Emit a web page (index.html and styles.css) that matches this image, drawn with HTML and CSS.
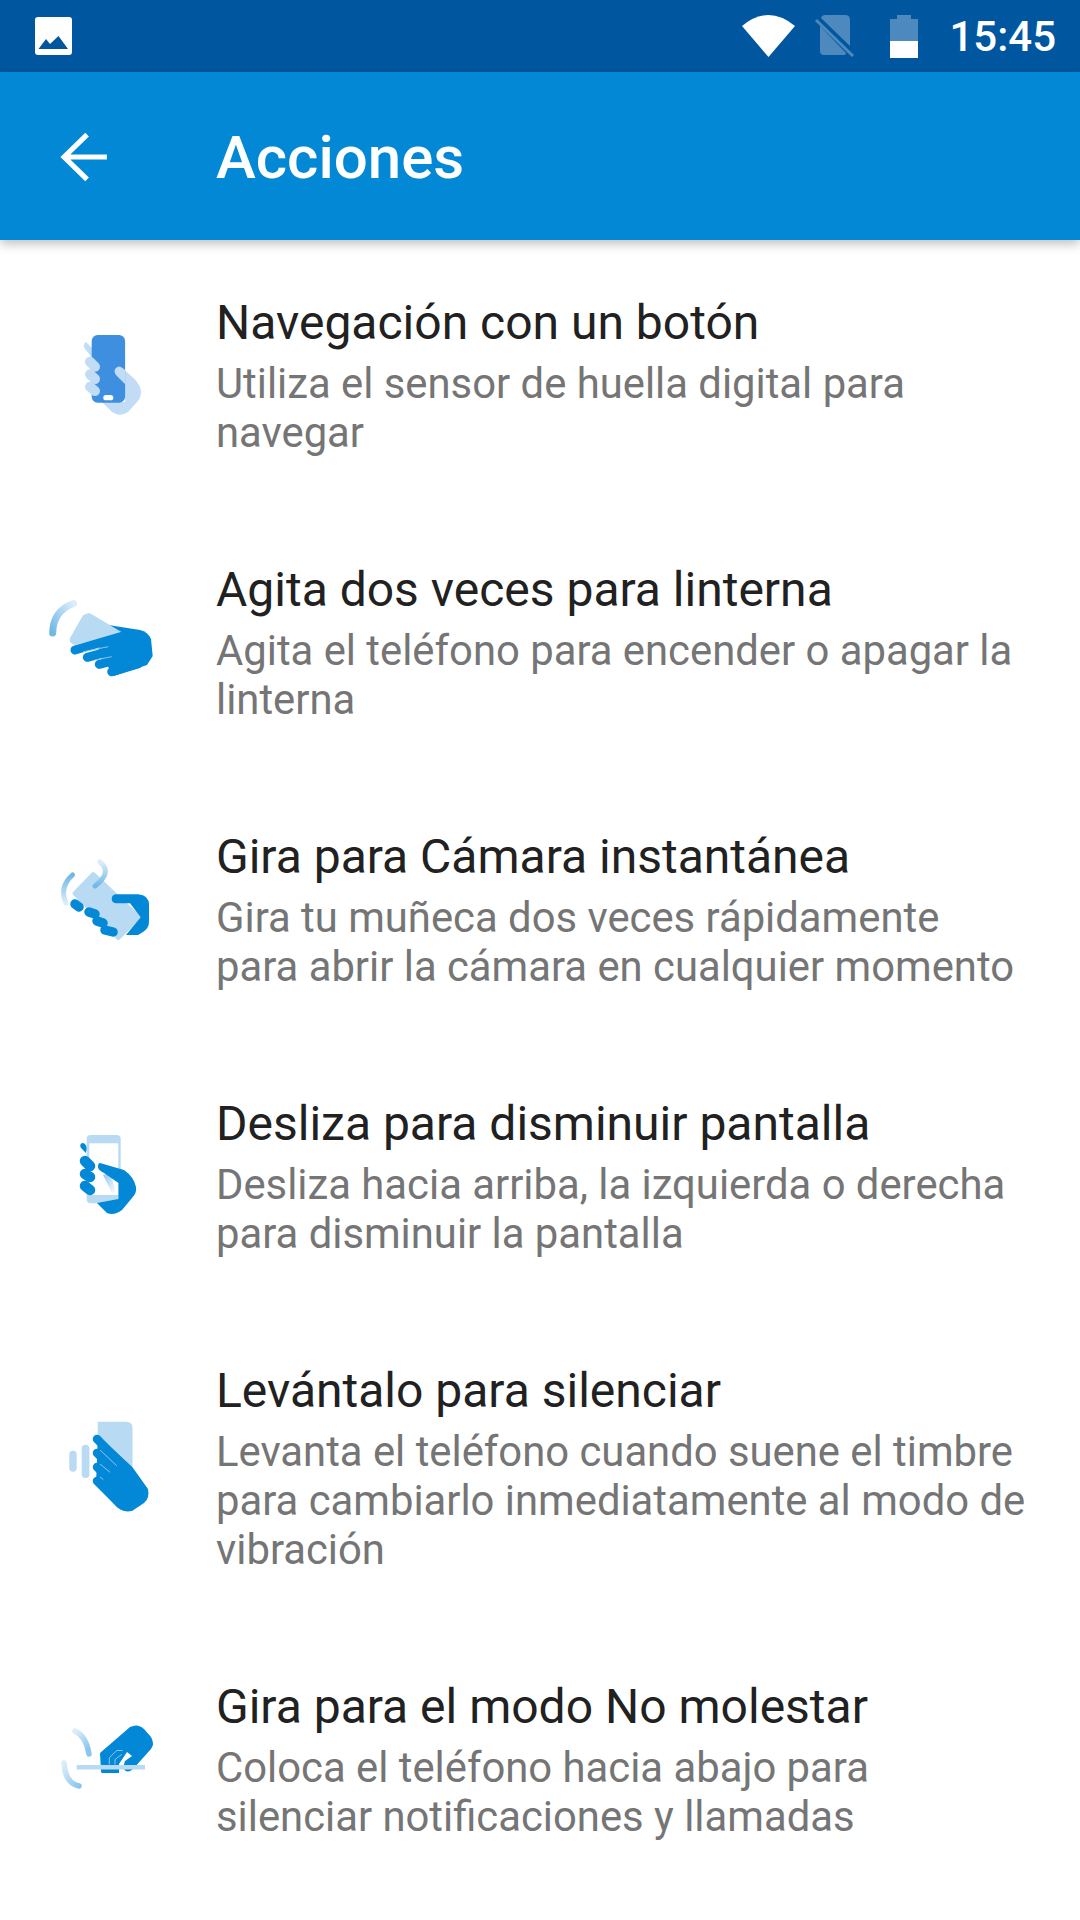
FILE: index.html
```html
<!DOCTYPE html>
<html lang="es">
<head>
  <meta charset="UTF-8">
  <meta name="viewport" content="width=device-width, initial-scale=1.0">
  <title>Acciones</title>
  <link rel="stylesheet" href="styles.css">
</head>
<body>
  <div class="screen">
    <div class="status-bar">
      <svg class="status-image" viewBox="0 0 37 38">
        <rect width="37" height="38" rx="3" fill="#fff"/>
        <path d="M3.500 32 L11 22 L15 27 L23.500 19 L33 32 Z" fill="#01579b"/>
      </svg>
      <div class="status-right">
        <svg class="status-wifi" viewBox="0 0 53 42">
          <path d="M0 11 Q26.500 -11 53 11 L26.500 42 Z" fill="#fff"/>
        </svg>
        <svg class="status-sim" viewBox="0 0 40 42">
          <path d="M10 0 H30 Q35 0 35 5 V31 L6 3 Q7 0 10 0 Z M5 11 L31 38 Q31 40 28 40 H9 Q5 40 5 36 Z" fill="#fff" fill-opacity="0.3"/>
          <path d="M1 5 L38 41" stroke="#fff" stroke-opacity="0.3" stroke-width="3"/>
        </svg>
        <svg class="status-battery" viewBox="0 0 28 43">
          <path d="M7 0 H21 V4 H28 V26 H0 V4 H7 Z" fill="#fff" fill-opacity="0.3"/>
          <rect y="26" width="28" height="17" fill="#fff"/>
        </svg>
        <span class="status-time">15:45</span>
      </div>
    </div>

    <header class="toolbar">
      <svg class="back-icon" viewBox="0 0 48 48">
        <path d="M45 24 H4 M26 2.500 L4 24 L26 45.500" fill="none" stroke="#fff" stroke-width="5"/>
      </svg>
      <h1>Acciones</h1>
    </header>

    <div class="list">
      <div class="row">
        <svg class="row-icon" viewBox="0 0 120 120">
          <path d="M38 28 L46 36 V46 L37 35 Q34 31 38 28 Z" fill="#c2dcf6"/>
          <path d="M74.500 54 L86.500 65 Q93 72 93 78 Q93 84 89 88 L80 98 Q74 102 68 100 Q63 98 60 94 L54 88 H77 V70 L68 61 Q65 57 68 54 Q71 51 74.500 54 Z" fill="#c2dcf6"/>
          <rect x="43.700" y="21" width="33.400" height="67.700" rx="6" fill="#3f8fe0"/>
          <path d="M74.500 54 L77 56 V70 L68 61 Q65 57 68 54 Q71 51 74.500 54 Z" fill="#c2dcf6"/>
          <g stroke="#c2dcf6" stroke-width="10" stroke-linecap="round">
            <path d="M42 47.700 L47 52.700"/>
            <path d="M42 60.300 L47 65"/>
            <path d="M42 72.700 L47 77"/>
          </g>
          <rect x="55.300" y="81" width="10" height="5.300" rx="2.600" fill="#fff"/>
        </svg>
        <div class="row-text">
          <div class="row-title">Navegación con un botón</div>
          <div class="row-summary">Utiliza el sensor de huella digital para navegar</div>
        </div>
      </div>

      <div class="row">
        <svg class="row-icon" viewBox="0 0 120 120">
          <defs>
            <linearGradient id="fade2" x1="0" y1="1" x2="1" y2="0">
              <stop offset="0" stop-color="#6fb8e6"/>
              <stop offset="1" stop-color="#dcedf9"/>
            </linearGradient>
          </defs>
          <path d="M4.700 52 Q5 30 25.500 22.500" fill="none" stroke="url(#fade2)" stroke-width="7" stroke-linecap="round"/>
          <path d="M60.300 44 L92 49 Q100 51 103 58 L104.700 75 L99 84 L66 95 L50 70 Z" fill="#0288d6"/>
          <path d="M22 57 L34 36 Q37 32 42 32.300 L74.700 51.700 L27 64 Q20 62 22 57 Z" fill="#b8daf2"/>
          <g stroke="#0288d6" stroke-width="9" stroke-linecap="round">
            <path d="M27 69 L75 55"/>
            <path d="M39.300 76.300 L72 67.300"/>
            <path d="M51.300 83.300 L78.700 75.700"/>
            <path d="M63.700 90.700 L90 83"/>
          </g>
          <g stroke="#8cc6ec" stroke-width="1">
            <path d="M35.300 70.700 L60.300 65.700"/>
            <path d="M47 79 L63.700 75.700"/>
          </g>
        </svg>
        <div class="row-text">
          <div class="row-title">Agita dos veces para linterna</div>
          <div class="row-summary">Agita el teléfono para encender o apagar la linterna</div>
        </div>
      </div>

      <div class="row">
        <svg class="row-icon" viewBox="0 0 120 120">
          <defs>
            <linearGradient id="fade3a" x1="0.500" y1="0" x2="0.500" y2="1">
              <stop offset="0" stop-color="#6fb8e6"/>
              <stop offset="1" stop-color="#dcedf9"/>
            </linearGradient>
            <linearGradient id="fade3b" x1="0.500" y1="1" x2="0.500" y2="0">
              <stop offset="0" stop-color="#6fb8e6"/>
              <stop offset="1" stop-color="#dcedf9"/>
            </linearGradient>
          </defs>
          <path d="M24.500 27 Q11 39 18 55" fill="none" stroke="url(#fade3a)" stroke-width="5" stroke-linecap="round"/>
          <path d="M45.300 26 L26.500 45.300 L70.300 90 L91 69.300 Z" fill="#b8daf2" stroke="#b8daf2" stroke-width="4" stroke-linejoin="round"/>
          <path d="M52 14 Q65 24 47 38" fill="none" stroke="url(#fade3b)" stroke-width="5" stroke-linecap="round"/>
          <path d="M68.700 46.300 H90 Q101 47 101 57 V74 Q101 80 95 84 L90 87 H78 L92.700 69.300 L82 55.300 H68.700 Q63.700 55 63.700 51 Q63.700 46.500 68.700 46.300 Z" fill="#0288d6"/>
          <g stroke="#0288d6" stroke-width="9.500" stroke-linecap="round">
            <path d="M27 56 L31 59"/>
            <path d="M41 64 L47 66"/>
            <path d="M49 73 L55 75"/>
            <path d="M57 82 L65 84"/>
          </g>
        </svg>
        <div class="row-text">
          <div class="row-title">Gira para Cámara instantánea</div>
          <div class="row-summary">Gira tu muñeca dos veces rápidamente para abrir la cámara en cualquier momento</div>
        </div>
      </div>

      <div class="row">
        <svg class="row-icon" viewBox="0 0 120 120">
          <defs>
            <linearGradient id="fade4" x1="0" y1="0" x2="1" y2="1">
              <stop offset="0" stop-color="#8cc6ec"/>
              <stop offset="1" stop-color="#ffffff"/>
            </linearGradient>
          </defs>
          <rect x="38.700" y="20" width="34" height="68.300" rx="4" fill="#b8daf2"/>
          <rect x="41.300" y="28.300" width="29" height="51.700" fill="#fff"/>
          <path d="M55 60 L62 58 L68 76 L64 78 Z" fill="url(#fade4)"/>
          <path d="M52 48 L76 55 Q86 62 88 72 Q89 78 84 83 L74 95 Q66 101 59 98 L49 88 L70.500 84 V68 L56 58 Q50 55 50 52 Q50 48 52 48 Z" fill="#0288d6"/>
          <path d="M34 28 Q38 28 38.700 33 L38 38 L33 33 Q31 30 34 28 Z" fill="#0288d6"/>
          <g stroke="#0288d6" stroke-width="10.500" stroke-linecap="round">
            <path d="M37 46 L42 51"/>
            <path d="M37 59 L42 62"/>
            <path d="M37 71 L42 75"/>
          </g>
        </svg>
        <div class="row-text">
          <div class="row-title">Desliza para disminuir pantalla</div>
          <div class="row-summary">Desliza hacia arriba, la izquierda o derecha para disminuir la pantalla</div>
        </div>
      </div>

      <div class="row">
        <svg class="row-icon" viewBox="0 0 120 120">
          <path d="M50 15.700 H78 Q84.500 15.700 84.500 22 V61.300 H49.700 V20 Q49.700 15.700 50 15.700 Z" fill="#b8daf2"/>
          <rect x="21.300" y="44.700" width="7.400" height="21" rx="3.700" fill="#b8daf2"/>
          <rect x="33.700" y="38.700" width="7.700" height="33.300" rx="3.800" fill="#b8daf2"/>
          <path d="M50 29 L84.500 61.300 L100 83 Q102 92 96 97 L84 105 Q74 107 68 100 L48 78 Z" fill="#0288d6"/>
          <g stroke="#0288d6" stroke-width="8.500" stroke-linecap="round">
            <path d="M49 33 L80 65"/>
            <path d="M49 47 L80 78"/>
            <path d="M49 61 L80 92"/>
            <path d="M49 75 L72 98"/>
          </g>
          <g stroke="#8cc6ec" stroke-width="1">
            <path d="M52 44 L68.700 59.700"/>
            <path d="M52 58 L62 66.300"/>
            <path d="M52 71 L55.300 73.700"/>
          </g>
        </svg>
        <div class="row-text">
          <div class="row-title">Levántalo para silenciar</div>
          <div class="row-summary">Levanta el teléfono cuando suene el timbre para cambiarlo inmediatamente al modo de vibración</div>
        </div>
      </div>

      <div class="row">
        <svg class="row-icon" viewBox="0 0 120 120">
          <defs>
            <linearGradient id="fade6a" x1="0" y1="0" x2="0.500" y2="1">
              <stop offset="0" stop-color="#dcedf9"/>
              <stop offset="1" stop-color="#8cc6ec"/>
            </linearGradient>
            <linearGradient id="fade6b" x1="0" y1="0" x2="1" y2="1">
              <stop offset="0" stop-color="#dcedf9"/>
              <stop offset="1" stop-color="#8cc6ec"/>
            </linearGradient>
          </defs>
          <path d="M27 33 Q38 38 41 56" fill="none" stroke="url(#fade6a)" stroke-width="5.500" stroke-linecap="round"/>
          <path d="M16 65 Q17 85 31 88" fill="none" stroke="url(#fade6b)" stroke-width="5.500" stroke-linecap="round"/>
          <path d="M52 55 L82 29 Q90 25 96 31 L103 39 Q107 46 103 51 L85 71 Q79 76 76 71 Q75 67 77 63 L84 58 L79 54 L71 66 V75 H54 Q53 75 53 73 Z" fill="#0288d6"/>
          <g fill="none" stroke="#8cc6ec" stroke-width="1">
            <path d="M61.300 66.500 V59.800 L68.700 52.500 H74.700"/>
            <path d="M67 66.500 V61.500 L73.700 56.500"/>
          </g>
          <rect x="28.700" y="67" width="68.300" height="4.500" fill="#b8daf2"/>
        </svg>
        <div class="row-text">
          <div class="row-title">Gira para el modo No molestar</div>
          <div class="row-summary">Coloca el teléfono hacia abajo para silenciar notificaciones y llamadas</div>
        </div>
      </div>
    </div>
  </div>
</body>
</html>
```

FILE: styles.css
```css
* {
  box-sizing: border-box;
}
body {
  margin: 0;
  font-family: 'Roboto', sans-serif;
  background-color: #fff;
}
.screen {
  width: 1080px;
  height: 1920px;
  overflow: hidden;
}
.status-bar {
  height: 72px;
  background-color: #01579f;
  display: flex;
  align-items: center;
  justify-content: space-between;
  padding: 0 24px 0 35px;
}
.status-image {
  width: 37px;
  height: 38px;
}
.status-right {
  display: flex;
  align-items: center;
}
.status-wifi {
  width: 53px;
  height: 42px;
}
.status-sim {
  width: 40px;
  height: 42px;
  margin-left: 20px;
}
.status-battery {
  width: 28px;
  height: 43px;
  margin-left: 35px;
}
.status-time {
  margin-left: 31px;
  color: #fff;
  font-size: 42px;
  font-weight: 500;
}
.toolbar {
  height: 168px;
  background-color: #0288d4;
  display: flex;
  align-items: center;
  padding-left: 60px;
  box-shadow: 0 4px 10px rgba(0,0,0,0.25);
  position: relative;
}
.back-icon {
  width: 50px;
  height: 50px;
  margin-top: 1px;
}
.toolbar h1 {
  margin: 2px 0 0 106px;
  color: #fff;
  font-size: 60px;
  font-weight: 500;
}
.row {
  display: flex;
  align-items: center;
  padding: 54px 52px 50px 48px;
}
.row-icon {
  width: 120px;
  height: 120px;
  flex-shrink: 0;
  margin-top: -4px;
}
.row-text {
  margin-left: 48px;
}
.row-title {
  font-size: 48px;
  line-height: 57px;
  color: #212121;
  margin-bottom: 8px;
}
.row-summary {
  font-size: 41.8px;
  line-height: 49px;
  color: #757575;
}
```
